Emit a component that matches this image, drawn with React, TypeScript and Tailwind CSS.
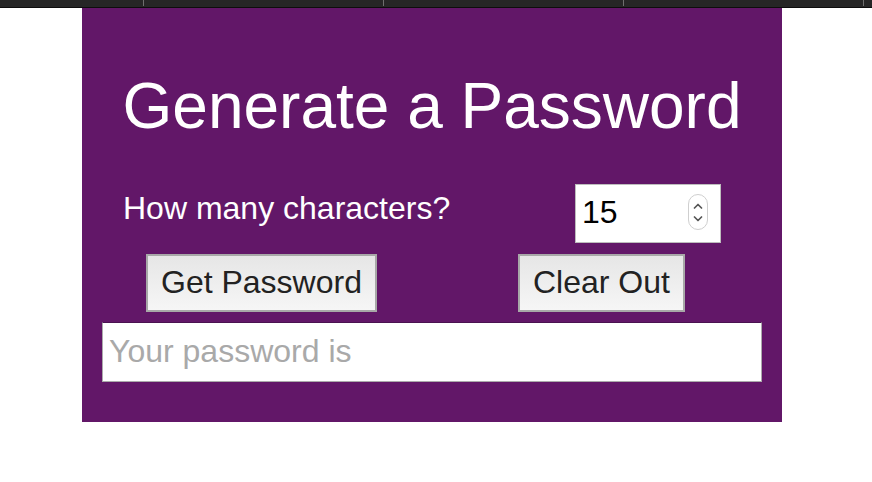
import { useState } from "react";

const TABS = [0, 1, 2, 3];

function Spinner() {
  return (
    <div className="flex h-[36px] w-[20px] flex-col items-center justify-center gap-[7px] rounded-full border border-[#cfcfcf] bg-white">
      <svg width="10" height="6" viewBox="0 0 10 6" fill="none">
        <path d="M1.5 5 L5 1.5 L8.5 5" stroke="#555" strokeWidth="1.7" strokeLinecap="round" strokeLinejoin="round" />
      </svg>
      <svg width="10" height="6" viewBox="0 0 10 6" fill="none">
        <path d="M1.5 1 L5 4.5 L8.5 1" stroke="#555" strokeWidth="1.7" strokeLinecap="round" strokeLinejoin="round" />
      </svg>
    </div>
  );
}

export default function App() {
  const [length, setLength] = useState("15");
  const [password, setPassword] = useState("");

  const generate = () => {
    const chars = "abcdefghijklmnopqrstuvwxyzABCDEFGHIJKLMNOPQRSTUVWXYZ0123456789!@#$%^&*";
    const n = Math.max(1, Number(length) || 0);
    let out = "";
    for (let i = 0; i < n; i++) out += chars[Math.floor(Math.random() * chars.length)];
    setPassword(out);
  };

  return (
    <div className="min-h-[482px] bg-white font-['Liberation_Sans',Arial,sans-serif]">
      {/* top strip */}
      <div className="flex h-[8px] overflow-hidden border-b border-[#0d0d0d] bg-[#262626]">
        <div className="w-[143px] shrink-0" />
        {TABS.map((t) => (
          <div key={t} className="h-[6px] w-[240px] shrink-0 border-l border-[#6e6e6e]" />
        ))}
      </div>

      <div className="ml-[82px] w-[700px] bg-[#621768] pt-[62px] pb-[40px]">
        <h1 className="text-center text-[64px] leading-[72px] text-white">Generate a Password</h1>

        <div className="mt-[42px] flex items-start justify-between pl-[41px] pr-[61px]">
          <label className="mt-[6px] text-[32px] leading-[36px] text-white">How many characters?</label>
          <div className="flex h-[59px] w-[146px] items-center border border-[#bdbdbd] bg-white pb-[3px] pl-[6px] pr-[12px]">
            <input
              value={length}
              onChange={(e) => setLength(e.target.value)}
              className="w-full min-w-0 flex-1 bg-transparent text-[32px] text-black outline-none"
            />
            <Spinner />
          </div>
        </div>

        <div className="mt-[11px] flex pl-[64px]">
          <button
            onClick={generate}
            className="h-[58px] border-2 border-[#a8a8a8] bg-gradient-to-b from-[#e6e6e6] to-[#f6f6f6] px-[13px] pb-[3px] text-[32px] leading-[36px] text-[#222]"
          >
            Get Password
          </button>
          <button
            onClick={() => setPassword("")}
            className="ml-[141px] h-[58px] border-2 border-[#a8a8a8] bg-gradient-to-b from-[#e6e6e6] to-[#f6f6f6] px-[13px] pb-[3px] text-[32px] leading-[36px] text-[#222]"
          >
            Clear Out
          </button>
        </div>

        <div className="mx-[20px] mt-[10px]">
          <input
            readOnly
            value={password}
            placeholder="Your password is"
            className="h-[60px] w-full border border-[#ababab] border-t-[#4a1250] bg-white px-[6px] pb-[2px] text-[32px] text-black outline-none placeholder:text-[#a9a9a9]"
          />
        </div>
      </div>
    </div>
  );
}
